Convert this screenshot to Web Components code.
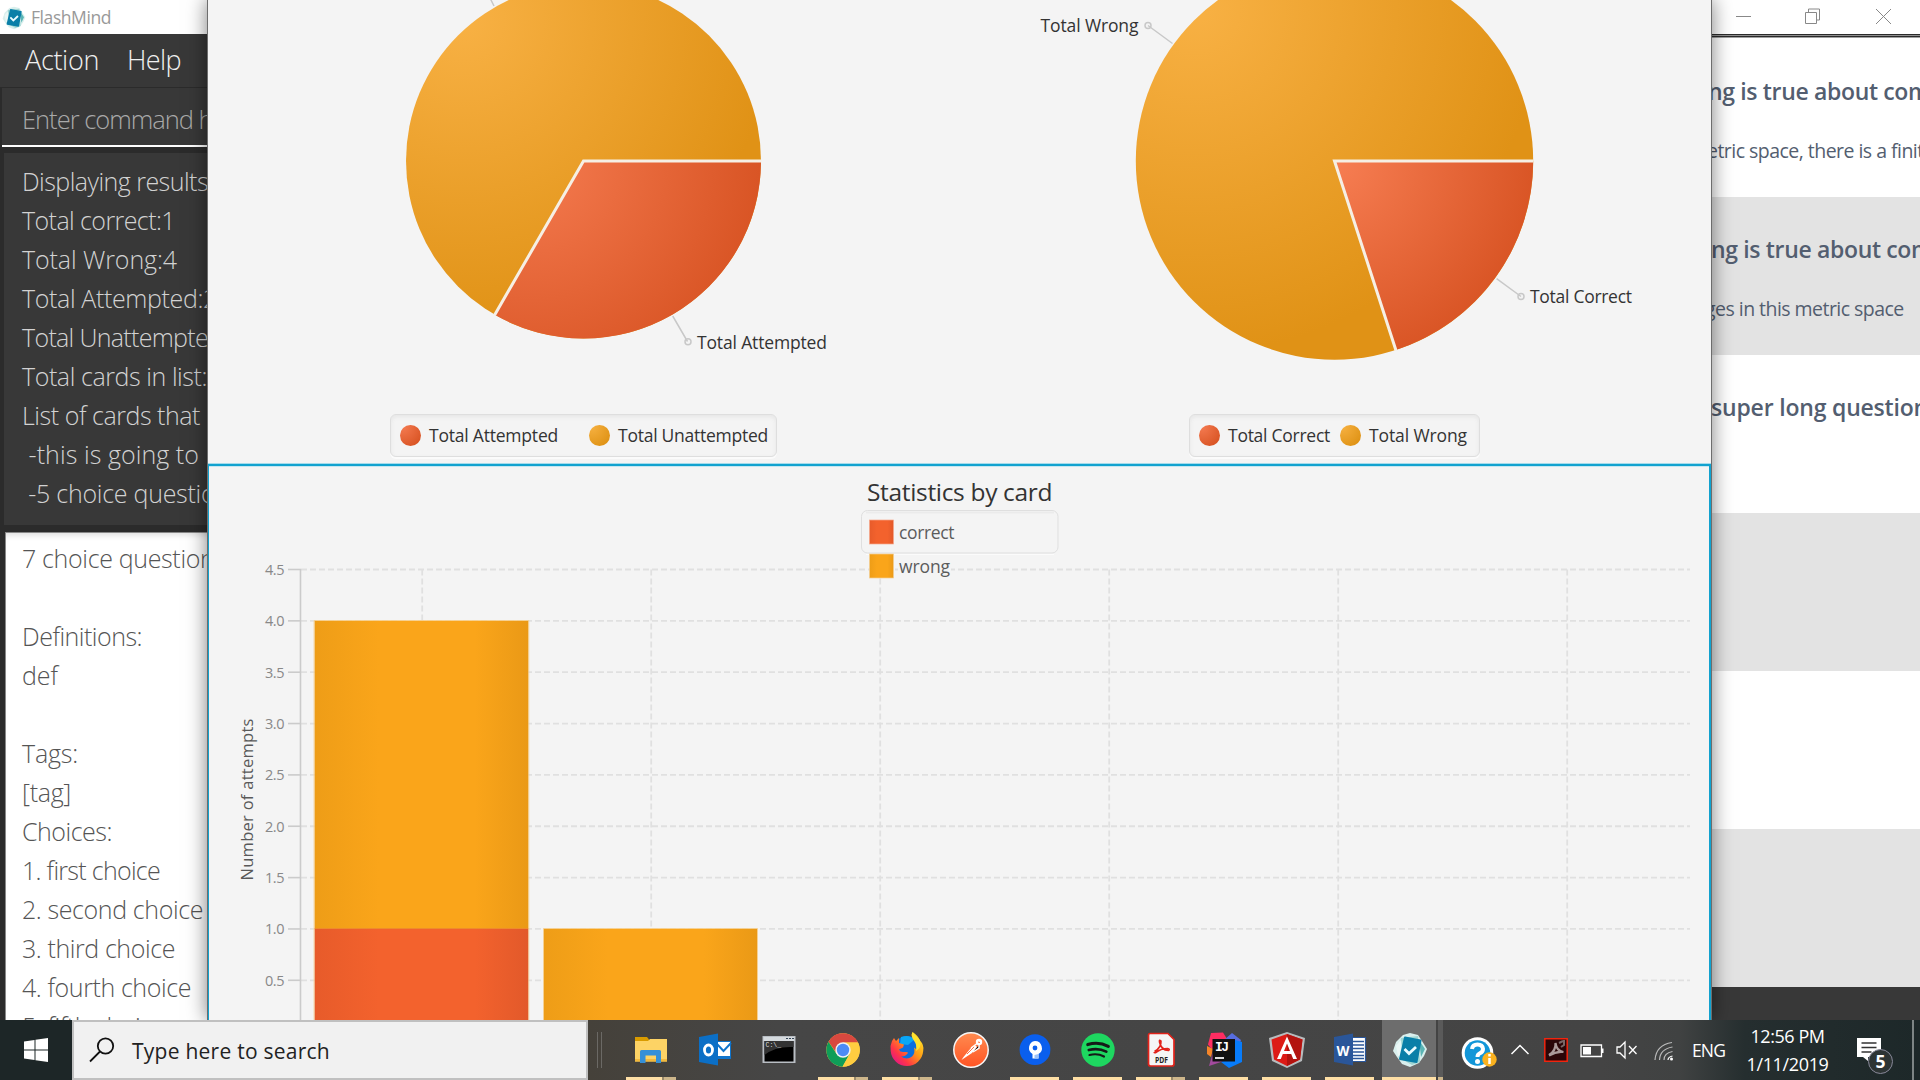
<!DOCTYPE html>
<html lang="en">
<head>
<meta charset="utf-8">
<title>FlashMind</title>
<style>
html,body{margin:0;height:100%;overflow:hidden}
body{font-family:"Open Sans","Noto Sans",sans-serif;width:1920px;height:1080px;background:#383838}
</style>
</head>
<body>
<desk-top></desk-top>
<script>
const FONT='"Open Sans","Noto Sans",sans-serif';
const ctx=document.createElement('canvas').getContext('2d');
function define(name,html,after){
  const t=document.createElement('template');t.innerHTML=html;
  customElements.define(name,class extends HTMLElement{
    constructor(){super();this.attachShadow({mode:'open'}).append(t.content.cloneNode(true));}
    connectedCallback(){if(after)after(this,this.shadowRoot);}
  });
}

/* One line of text: f = size, l = line height, w = width of the text (or of its prefix "ref"), wt = weight */
define('ui-text',`<style>:host{display:block;white-space:pre;flex:none}</style><slot></slot>`,(h)=>{
  const f=+h.getAttribute('f'),wt=h.getAttribute('wt')||400,w=+h.getAttribute('w');
  h.style.font=`${wt} ${f}px/${h.getAttribute('l')||Math.round(f*1.4)}px ${FONT}`;
  if(w){
    const r=h.getAttribute('ref')||h.textContent;
    ctx.font=`${wt} ${f}px ${FONT}`;
    h.style.letterSpacing=((w-ctx.measureText(r).width)/r.length).toFixed(3)+'px';
  }
});

define('flash-icon',`<style>:host{display:block}svg{display:block;width:100%;height:100%}</style>
<svg viewBox="0 0 36 36">
<path fill="#d9efed" d="M11 3 18 1l8 2 4 6 5 8-3 7-5 7-9 4-8-3-5-7-4-6 3-9z"/>
<path fill="#9fd6d3" d="M9 6l17-2 2 26-8 3-14-8z"/><path fill="#eaf7f6" d="M4 14l5-6 2 21-5-5z"/>
<path fill="#5bb5b5" d="M27 8l6 9-4 8z"/>
<path fill="#0a7fa8" stroke="#0a7fa8" stroke-width="2" stroke-linejoin="round" d="M13 5.500 28.500 8.500 24.500 30 8 27z"/>
<path fill="none" stroke="#e9fbff" stroke-width="2.800" d="M12.500 17l4.500 4.500 7-6.500"/>
</svg>`);

define('app-side',`<style>
:host{display:flex;flex-direction:column;width:208px;height:1020px;overflow:hidden;background:#2b2b2b}
.title{height:34px;background:#fff;display:flex;align-items:center;color:#999;padding:2px 0 0 2px;gap:5px;box-sizing:border-box}
flash-icon{width:24px;height:24px}
.menu{height:53px;background:#383838;color:#f0f0f0;display:flex;padding:0 0 2px 25px;align-items:center;box-sizing:border-box}
.cmd{margin:1px 0 0 2px;height:56px;background:#383838;border-bottom:2px solid #fff;padding:1px 0 0 20px;color:#a9a9a9}
.res{margin:6px 0 0 4px;height:372px;box-sizing:border-box;background:#383838;padding:9px 0 0 18px;color:#d2d2d2}
.card{margin:7px 0 0 5px;height:489px;background:#fff;border-top:1px solid #888;border-left:1px solid #888;box-sizing:border-box;padding:6px 0 0 16px;color:#555;overflow:hidden;box-shadow:inset 0 6px 6px -4px #ddd}
</style>
<div class="title"><flash-icon></flash-icon><ui-text f="17.500" w="80">FlashMind</ui-text></div>
<div class="menu"><ui-text f="27" l="51" wt="300" w="74">Action</ui-text><ui-text f="27" l="51" wt="300" w="54" style="margin-left:28px">Help</ui-text></div>
<div class="cmd"><ui-text f="25.500" l="60" wt="300" w="171" ref="Enter command">Enter command here...</ui-text></div>
<div class="res"></div>
<div class="card"></div>`,(h,s)=>{
  const add=(sel,rows)=>s.querySelector(sel).innerHTML=rows.map(([t,w,r])=>`<ui-text f="25" l="39" wt="350" ${w?`w="${w}"`:''} ${r?`ref="${r}"`:''}>${t||' '}</ui-text>`).join('');
  add('.res',[['Displaying results:',186,'Displaying results'],['Total correct:1',153],['Total Wrong:4',155],['Total Attempted:2',181,'Total Attempted:'],['Total Unattempted:4',186,'Total Unattempte'],['Total cards in list:6',185,'Total cards in list:'],['List of cards that',178],[' -this is going to be',177,' -this is going to'],[' -5 choice question',179,' -5 choice questi']]);
  add('.card',[['7 choice question',178,'7 choice questio'],[''],['Definitions:',120],['def',36],[''],['Tags:',56],['[tag]',49],['Choices:',90],['1. first choice',138],['2. second choice',181],['3. third choice',153],['4. fourth choice',169],['5. fifth choice',143]]);
});

define('card-list',`<style>
:host{display:flex;flex-direction:column;width:209px;height:1020px;background:#383838;color:#535e70;overflow:hidden}
.bar{height:34px;background:#fff;flex:none}
.line{height:4px;background:linear-gradient(#2b2b2b 1px,#8f8f8f 1px,#8f8f8f 2px,#2b2b2b 2px,#2b2b2b 3px,#a0a0a0 3px);flex:none}
svg{display:block}
.row{height:158px;background:#fff;overflow:hidden;flex:none}
.row:first-of-type{height:159px}
.g{background:#e3e3e3}
.row ui-text+ui-text{margin-top:20px}
</style>
<div class="bar"><svg width="209" height="34" fill="none" stroke="#888"><path d="M25 16.500h15M94.500 12.500h11v11h-11zM97.500 12v-3h11v11h-3M165 9l15 15M180 9l-15 15"/></svg></div>
<div class="line"></div>
<section class="row"><ui-text f="23" l="40" wt="600" w="143" ref="is true about " style="margin:33px 0 0 -3px">ng is true about compactness</ui-text><ui-text f="19.500" l="40" w="184" ref="etric space, there is a " style="margin-left:-4px">etric space, there is a finite</ui-text></section>
<section class="row g"><ui-text f="23" l="40" wt="600" w="143" ref="is true about " style="margin:32px 0 0 0">ng is true about compactness</ui-text><ui-text f="19.500" l="40" w="165" ref="in this metric space" style="margin-left:-6px">ges in this metric space</ui-text></section>
<section class="row"><ui-text f="23" l="40" wt="600" w="121" ref="super long " style="margin:32px 0 0 0">super long question</ui-text></section>
<section class="row g"></section><section class="row"></section><section class="row g"></section>`);

define('legend-box',`<style>
:host{display:flex;align-items:center;box-sizing:border-box;height:43px;border:1px solid #dedede;border-radius:6px;box-shadow:inset 0 2px 4px #e6e6e6,0 2px 0 #fbfbfb;color:#333;padding-left:9px}
i{width:21px;height:21px;border-radius:50%;margin-right:8px;flex:none}
.r{background:radial-gradient(circle at 15% 10%,#f47a50,#da5626 80%)}
.o{background:radial-gradient(circle at 15% 10%,#f6b040,#e09417 80%)}
</style><i class="r"></i><slot name="a"></slot><i class="o"></i><slot name="b"></slot>`,(h,s)=>{s.querySelector('.o').style.marginLeft=h.getAttribute('gap')+'px';});

/* Two pies; JavaFX style gradients and leader lines */
define('pie-panel',`<style>
:host{display:grid;grid-template-rows:414px 43px;height:463px;position:relative}
svg{display:block;overflow:hidden}
.lg{display:flex}
text{font:17.500px "Open Sans","Noto Sans",sans-serif;fill:#333}
</style>
<svg width="1503" height="413" viewBox="208 0 1503 413">
<defs>
<radialGradient id="o1" gradientUnits="userSpaceOnUse" cx="463" cy="20" r="310"><stop offset="0" stop-color="#f8b144"/><stop offset="1" stop-color="#e09216"/></radialGradient>
<radialGradient id="r1" gradientUnits="userSpaceOnUse" cx="530" cy="161" r="230"><stop offset="0" stop-color="#f57b50"/><stop offset="1" stop-color="#d95525"/></radialGradient>
<radialGradient id="o2" gradientUnits="userSpaceOnUse" cx="1195" cy="8" r="345"><stop offset="0" stop-color="#f8b144"/><stop offset="1" stop-color="#e09216"/></radialGradient>
<radialGradient id="r2" gradientUnits="userSpaceOnUse" cx="1334" cy="161" r="202"><stop offset="0" stop-color="#f77e53"/><stop offset="1" stop-color="#d95525"/></radialGradient>
</defs>
<circle cx="583.500" cy="161" r="177.500" fill="url(#o1)"/>
<path fill="url(#r1)" d="M583.500 161H761A177.500 177.500 0 0 1 494.750 314.720z"/>
<path fill="none" stroke="#f6efe4" stroke-width="3" d="M761.500 161H583.500L494.500 315.200"/>
<circle cx="1334.500" cy="161" r="198.700" fill="url(#o2)"/>
<path fill="url(#r2)" d="M1334.500 161h198.700A198.700 198.700 0 0 1 1395.900 350z"/>
<path fill="none" stroke="#f6efe4" stroke-width="3" d="M1533.500 161H1334.500L1396 350.500"/>
<g fill="none" stroke="#c8c8c8" stroke-width="1.500">
<path d="M490.500-1 494 6M672.700 316 687.500 341.500M1172.500 43.500 1148 25.500M1496.600 278.700 1521 296.500"/>
<circle cx="688" cy="341.700" r="3"/><circle cx="1148" cy="25.500" r="3"/><circle cx="1521" cy="296.500" r="3"/></g>
<text x="697" y="349" textLength="130">Total Attempted</text>
<text x="1040.500" y="32" textLength="98">Total Wrong</text>
<text x="1530" y="303" textLength="102">Total Correct</text>
</svg>
<div class="lg">
<legend-box gap="31" style="width:387px;margin-left:182px"><ui-text slot="a" f="17.500" w="129">Total Attempted</ui-text><ui-text slot="b" f="17.500" w="150">Total Unattempted</ui-text></legend-box>
<legend-box gap="10" style="width:291px;margin-left:412px"><ui-text slot="a" f="17.500" w="102">Total Correct</ui-text><ui-text slot="b" f="17.500" w="98">Total Wrong</ui-text></legend-box>
</div>`);

define('bar-panel',`<style>
:host{display:block;height:557px;box-sizing:border-box;border:2px solid #12a2cf;border-left-width:1px;border-bottom:0;overflow:hidden;box-shadow:0 -1px 0 #a4dcec,inset 0 1px 0 #c5e7f1}
svg{display:block}
text{font-family:"Open Sans","Noto Sans",sans-serif}
</style><svg width="1500" height="554" viewBox="209 466 1500 554"></svg>`,(h,s)=>{
  let o=`<defs><linearGradient id="bo"><stop offset="0" stop-color="#ee9d17"/><stop offset=".3" stop-color="#faa51a"/><stop offset=".75" stop-color="#faa51a"/><stop offset="1" stop-color="#ea9916"/></linearGradient>
  <linearGradient id="br"><stop offset="0" stop-color="#e75b2a"/><stop offset=".3" stop-color="#f3622d"/><stop offset=".75" stop-color="#f3622d"/><stop offset="1" stop-color="#e2592a"/></linearGradient></defs>`;
  o+='<g stroke="#e0e0e0" stroke-width="1.800" stroke-dasharray="6 3">';
  for(let i=0;i<9;i++)o+=`<path d="M301 ${569.5+i*51.35}H1690"/>`;
  for(let i=0;i<6;i++)o+=`<path d="M${422.2+i*229} 569.500V1020"/>`;
  o+='</g><g stroke="#cbcbcb" stroke-width="1.600"><path d="M300.500 569V1020"/>';
  for(let i=0;i<9;i++)o+=`<path d="M288 ${569.5+i*51.35}h13"/>`;
  o+='</g><g font-size="14.500" fill="#888">';
  for(let i=0;i<9;i++)o+=`<text x="265" y="${574.9+i*51.35}" textLength="19.500">${(4.5-i*.5).toFixed(1)}</text>`;
  o+=`</g><rect x="314.500" y="620.500" width="214" height="308" fill="url(#bo)"/><rect x="314.500" y="928.500" width="214" height="92" fill="url(#br)"/><rect x="543.500" y="928.500" width="214" height="92" fill="url(#bo)"/>
  <path d="M314.500 928.500h214" stroke="#ee8b2c"/>
  <path d="M314 620.500h214.800V1020M314 620.500V1020M543.500 1020V928.500h214V1020" fill="none" stroke="#f6d398" stroke-width=".8"/>
  <text transform="translate(253 880.500) rotate(-90)" font-size="16.500" fill="#595959" textLength="162">Number of attempts</text>
  <text x="867" y="501" font-size="24.500" fill="#333" textLength="185.500">Statistics by card</text>
  <rect x="861.500" y="510.500" width="196.500" height="42.500" rx="6" fill="#f4f4f4" stroke="#dfdfdf"/><path d="M866 512.500h188" stroke="#ebebeb" stroke-width="2"/><path d="M866 554.500h188" stroke="#fbfbfb"/>
  <rect x="869.500" y="520" width="24" height="24" fill="url(#br)" stroke="#f6a88c" stroke-width=".7"/>
  <rect x="869.500" y="554" width="24" height="24" fill="url(#bo)" stroke="#f3cd92" stroke-width=".7"/>
  <rect x="898" y="558" width="53" height="20" fill="#f4f4f4"/>
  <g font-size="17.500" fill="#5c5c5c"><text x="899" y="538.500" textLength="55.500">correct</text><text x="899" y="573" textLength="51">wrong</text></g>`;
  s.querySelector('svg').innerHTML=o;
});

define('stats-dialog',`<style>
:host{display:flex;flex-direction:column;gap:1px;position:absolute;left:207px;top:-1px;width:1505px;height:1021px;box-sizing:border-box;background:#f4f4f4;border:1px solid #6d6d6d;border-bottom:0;box-shadow:0 0 19px rgba(0,0,0,.5)}
</style><pie-panel></pie-panel><bar-panel></bar-panel>`);

const T='font-family="Open Sans,Noto Sans,sans-serif"';
const icons={
folder:`<path fill="#d99b00" d="M2 5h12l2 2.500V12H2z"/><path fill="#fdd365" d="M2 9h13l2-2h17v22.500H2z"/><path fill="#f3b93c" d="M2 27h32v2.500H2z"/><path fill="#3590d8" d="M7 31V19.500q0-1.500 1.500-1.500h18q1.500 0 1.500 1.500V31h-5v-7.500H12.500V31z"/>`,
outlook:`<path fill="#0f74cc" d="M20 9h14v18H20z"/><path fill="#fff" d="M21 10h12v14H21z"/><path fill="none" stroke="#0f74cc" stroke-width="2" d="M20 12l6.500 7L34 11"/><path fill="#0b6fc6" d="M2 5 21 1.500v32L2 30z"/><ellipse cx="11.500" cy="18" rx="4" ry="5" fill="none" stroke="#fff" stroke-width="2.800"/>`,
cmd:`<path fill="#b9bec4" d="M1.500 4h33v27h-33z"/><path fill="#d5dade" d="M2.500 5h31v4h-31z"/><path fill="#000" d="M3.500 9h29v20.500h-29z"/><path fill="#333" d="M3.500 9h29v6q-18-1-29 8z"/><text x="4.500" y="14.500" font-size="6.500" fill="#ddd" font-family="Liberation Mono,monospace">C:\\_</text><path stroke="#345" d="M25 6.500h8" stroke-dasharray="2 1"/>`,
chrome:`<circle cx="18" cy="18" r="16.700" fill="#fc4"/><path fill="#d8483f" d="M3.500 9.700A16.700 16.700 0 0 1 33 10.500H18L11.500 21z"/><path fill="#0f9d58" d="M3.500 9.700A16.700 16.700 0 0 0 17.500 34.700L24.500 22 11.500 21.700z"/><path fill="#ffcd40" d="M33.100 10.500A16.700 16.700 0 0 1 17.500 34.700L24.800 22 21 10.500z"/><circle cx="18" cy="18" r="7.700" fill="#f1f1f1"/><circle cx="18" cy="18" r="6.200" fill="#4c8bf5"/>`,
firefox:`<defs><linearGradient id="ff" x1=".9" y1=".1" x2=".1" y2=".9"><stop offset="0" stop-color="#ffe226"/><stop offset=".4" stop-color="#ff9a16"/><stop offset=".75" stop-color="#ff3647"/><stop offset="1" stop-color="#e31587"/></linearGradient></defs><circle cx="18" cy="17" r="13" fill="#0b6fe0"/><path fill="#0aa7f5" d="M12 5q9-3 13 3l-6 5-8-1z"/><path fill="url(#ff)" d="M3 9 5 6l2 3 3-3v5l5 1.500-1 3-4 2q1 3 5 2.500 4-.500 4 1-3 4-7 3.500 6 4 11 0 3.500-3.500 2-9 2 1 2.500 2.500Q28 9 22.500 3q1.500-3 1-3 6 4 7 8 5 5 3.700 11A16.300 16.300 0 0 1 1.700 19Q1 13 3 9z"/><path fill="#ffe32e" d="M23.500 0q-2 4 1 8 4 5 2.500 11 6-3 4-11-4-4-7.500-8z"/>`,
postman:`<defs><linearGradient id="pm" x2="0" y2="1"><stop offset="0" stop-color="#ff8b50"/><stop offset="1" stop-color="#ff5424"/></linearGradient></defs><circle cx="18" cy="18" r="17.200" fill="url(#pm)" stroke="#f7f7f7" stroke-width="1.500"/><path fill="#fff" d="M8.500 28l2-3 7-8.500 5-3 1.500 1.500-5 6z"/><circle cx="26" cy="10" r="3.200" fill="#fff"/><path stroke="#fff" stroke-width="1.500" d="M18 16l6-4.500M20 20l6-4v-3"/><path stroke="#ff7344" d="M14 22l7-7M25 10l2 .500"/>`,
source:`<circle cx="18" cy="17.700" r="15.400" fill="#0a5fee"/><path fill="#fff" d="M18 9a7 7 0 0 1 3.500 13v4.500h-6V22A7 7 0 0 1 18 9z"/><path fill="#9cc1f8" d="M21.500 22v4.500h-4V23z"/><circle cx="18" cy="16" r="2.400" fill="#0a5fee"/>`,
spotify:`<circle cx="18" cy="18" r="16.700" fill="#1ed760"/><g fill="none" stroke="#151b18" stroke-linecap="round"><path stroke-width="3.200" d="M7.800 12.500q11-3.200 20.500 1.800"/><path stroke-width="2.700" d="M8.800 18q9.500-2.500 17.500 1.600"/><path stroke-width="2.200" d="M9.500 23q8-2 14.500 1.500"/></g>`,
pdf:`<path fill="#f5f5f5" stroke="#e2231a" stroke-width="1.700" d="M7 1.500h18l6 6V32q0 2-2 2H7.500q-2 0-2-2V3.500q0-2 1.500-2z"/><path fill="none" stroke="#e2231a" stroke-width="1.600" d="M11.500 19.500q7-4 6.500-10.500-2-2-1.500 1 1.500 8 9 8.500 2-1.500-1-2-6 0-11 3.500-2 1.500-2.500 0"/><text x="12" y="30.500" font-size="8" font-weight="700" fill="#222" textLength="13" lengthAdjust="spacingAndGlyphs" ${T}>PDF</text>`,
ij:`<path fill="#ff2d62" d="M5 1l12-.500 5 8-12 14-8-10z"/><path fill="#f58529" d="M1 14l6 3-2 8-4-3z"/><path fill="#a34a9e" d="M3 34 7 20l14 8z"/><path fill="#576de0" d="M18 8l8-7 9 7-3 8z"/><path fill="#087cfa" d="M26 7l10 3v20l-13 6-8-6 11-5z"/><path fill="#111" d="M6.500 7H29v22.500H6.500z"/><text x="9" y="18.500" font-size="13" font-weight="700" fill="#fff" textLength="14" font-family="Liberation Mono,monospace">IJ</text><path fill="#ddd" d="M9 25h9v2H9z"/>`,
angular:`<path fill="#b7bbbd" d="M18 0 36 6l-3 23-15 7L3 29 0 6z"/><path fill="#dd1b16" d="M18 2 33.500 7.500 31 27.500 18 34 5 27.500 2.500 7.500z"/><path fill="#b3130f" d="M18 2l15.500 5.500L31 27.500 18 34z"/><path fill="#fff" fill-rule="evenodd" d="M18 4.500 8 27h3.800l2-5h8.400l2 5H28zM18 11.500 21 19h-6z"/>`,
word:`<path fill="#fff" stroke="#2b579a" stroke-width="1.200" d="M20 5.500h13.500v24H20z"/><path stroke="#2b579a" stroke-width="1.500" d="M21 9.500h11M21 13h11M21 16.500h11M21 20h11M21 23.500h11M21 26.500h11"/><path fill="#2a5699" d="M2 5 21 1.500v32L2 30z"/><text x="4.500" y="24" font-size="15" font-weight="700" fill="#fff" textLength="13" lengthAdjust="spacingAndGlyphs" ${T}>W</text>`
};

/* A taskbar button; u = underline width, s = where its darker stack part begins */
define('task-button',`<style>
:host{display:flex;flex-direction:column;align-items:center;height:60px;flex:none;box-sizing:border-box;padding-top:12px}
.i{width:36px;height:36px}svg{display:block;overflow:visible}
.u{height:3px;margin-top:9px;align-self:flex-start;margin-left:7px}
</style><div class="i"></div><div class="u"></div>`,(h,s)=>{
  s.querySelector('.i').innerHTML=`<svg width="36" height="36" viewBox="0 0 36 36">${icons[h.getAttribute('icon')]}</svg>`;
  const u=+h.getAttribute('u'),sp=+h.getAttribute('s')||u,e=s.querySelector('.u');
  if(u){e.style.width=u+'px';e.style.background=`linear-gradient(90deg,#fedfa5 ${sp}px,#9a8a6c ${sp}px,#9a8a6c ${sp+2}px,#cdb68b ${sp+2}px)`;}
});

define('task-bar',`<style>
:host{display:flex;position:relative;height:60px;width:1920px;background:linear-gradient(90deg,#1d2627 0,#1d2627 72px,#45413a 588px,#464646 780px,#444 1600px,#404242 1680px,#252e2f 1745px,#1d2829 1920px);color:#fff}
.start{width:72px;display:grid;place-items:center}
.search{width:516px;box-sizing:border-box;border:2px solid #c0c0c0;background:#f1f1f1;display:flex;align-items:center;color:#222}
.sep{width:3px;height:36px;border-left:1px solid #6b6965;border-right:1px solid #6b6965;margin:12px 17px 0 9px}
.on{width:61px;box-sizing:border-box;height:60px;padding:12px 0 0 10px;background:linear-gradient(#fedfa5,#fedfa5) 0 57px/54px 3px no-repeat,linear-gradient(#cdb68b,#cdb68b) 56px 57px/5px 3px no-repeat,linear-gradient(90deg,#6d6d6d 54px,#434343 54px,#434343 56px,#5a5a5a 56px)}
.on flash-icon{width:36px;height:36px}
.tray{display:flex;align-items:center}
.tray svg{display:block;overflow:visible;flex:none}
.clock{width:83px;display:flex;flex-direction:column;align-items:center;margin-left:21px}
.end{width:1px;height:60px;background:#7d8585;margin-left:18px;border-right:1px solid #7d8585}
</style>
<div class="start"><svg width="24" height="24" fill="#fff"><path d="M0 3.500 10.500 2v9.500H0zM11.500 1.800 24 0v11.500H11.500zM0 12.500h10.500V22L0 20.500zM11.500 12.500H24V24l-12.500-1.800z"/></svg></div>
<div class="search"><svg width="28" height="26" style="margin-left:15px" fill="none" stroke="#111" stroke-width="1.800"><circle cx="16.500" cy="9" r="7.700"/><path d="M11 14.500 1 24.500"/></svg><ui-text f="21" l="54" w="198" style="margin:2px 0 0 15px">Type here to search</ui-text></div>
<div class="sep"></div>
<task-button icon="folder" u="50" s="36" style="width:64px"></task-button>
<task-button icon="outlook" style="width:64px"></task-button>
<task-button icon="cmd" style="width:64px"></task-button>
<task-button icon="chrome" u="50" s="36" style="width:64px"></task-button>
<task-button icon="firefox" u="50" s="36" style="width:64px"></task-button>
<task-button icon="postman" style="width:64px"></task-button>
<task-button icon="source" u="49" style="width:63px"></task-button>
<task-button icon="spotify" u="49" style="width:63px"></task-button>
<task-button icon="pdf" u="49" s="35" style="width:63px"></task-button>
<task-button icon="ij" u="49" style="width:63px"></task-button>
<task-button icon="angular" u="49" style="width:63px"></task-button>
<task-button icon="word" u="49" style="width:64px"></task-button>
<div class="on"><flash-icon></flash-icon></div>
<div class="tray">
<svg width="36" height="36" style="margin:2px 0 0 18px"><circle cx="16.500" cy="20" r="15.800" fill="#fff"/><circle cx="16.500" cy="20" r="12.800" fill="#1296d8"/><path fill="none" stroke="#fff" stroke-width="4" d="M11 16q.500-4.500 5.500-4.500t5.500 4.500q0 3-3.500 4.500-2 1-2 3.500"/><circle cx="16.500" cy="28.500" r="2.500" fill="#fff"/><circle cx="28.500" cy="26.500" r="7.200" fill="#f9b11f"/><path stroke="#fff" stroke-width="2.500" d="M28.500 25v6M28.500 21v2.500"/></svg>
<svg width="18" height="10" style="margin-left:14px" fill="none" stroke="#fff" stroke-width="1.500"><path d="M.500 9 9 .500 17.500 9"/></svg>
<svg width="24" height="24" style="margin-left:15px"><path fill="#2a0608" stroke="#f0250f" stroke-width="1.500" d="M.800.800h22.400v22.400H.800z"/><path fill="none" stroke="#a99" stroke-width="2.200" d="M5 17q7-4 6.500-12 1 8 8 9-7-1-14.500 3.500"/><path stroke="#766" stroke-width="2" fill="none" d="M15 5l4-2M20 2v5l-3 2"/></svg>
<svg width="24" height="14" style="margin:2px 0 0 12px"><path fill="none" stroke="#fff" stroke-width="1.300" d="M1 1h20.500v11.500H1z"/><path fill="#fff" d="M3 3h8v7.500H3zM22 4.500h1.500v4.500H22z"/></svg>
<svg width="21" height="18" style="margin-left:12px" fill="none" stroke="#fff" stroke-width="1.300"><path d="M1 6h3l5-5v16l-5-5H1zM13 5l7.500 8M20.500 5 13 13"/></svg>
<svg width="20" height="20" style="margin:2px 0 0 17px" fill="none" stroke="#fff" stroke-width="1.200"><path stroke="#bbb" d="M1 19Q2 4 18 1.500M5.500 19Q6 8 18.500 6M10 19q0-7 8.500-8.500"/><path d="M14 19q0-3 4.500-4"/><circle cx="17.500" cy="18" r="1.500" fill="#fff" stroke="none"/></svg>
<ui-text f="17.500" l="24" w="33" style="margin:0 0 0 18px">ENG</ui-text>
<div class="clock"><ui-text f="18" l="28" w="74">12:56 PM</ui-text><ui-text f="18" l="28" w="82">1/11/2019</ui-text></div>
<svg width="38" height="38" style="margin-left:27px"><path fill="#fff" d="M1 7h24v19H12l0 4-5-4H1z"/><path stroke="#333" stroke-width="1.400" d="M5.500 12h15M5.500 16.500h15M5.500 21h10"/><circle cx="24.500" cy="30.500" r="12" fill="#2d3434" stroke="#889" stroke-width="1"/><text x="19.500" y="37" font-size="17.500" font-weight="700" fill="#fff" ${T}>5</text></svg>
<div class="end"></div>
</div>`);

define('desk-top',`<style>
:host{display:flex;flex-direction:column;width:1920px;height:1080px;overflow:hidden}
.win{display:flex;justify-content:space-between;height:1020px;position:relative;overflow:hidden}
</style><div class="win"><app-side></app-side><card-list></card-list><stats-dialog></stats-dialog></div><task-bar></task-bar>`);
</script>
</body>
</html>
